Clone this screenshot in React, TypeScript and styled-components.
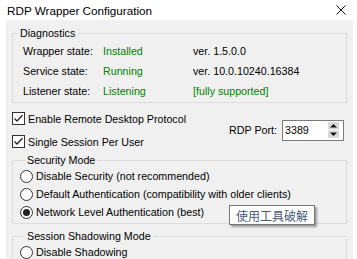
import React from 'react';
import styled, { createGlobalStyle } from 'styled-components';

const FONT = `"Liberation Sans", Arial, sans-serif`;

const Global = createGlobalStyle`
  html, body { margin: 0; padding: 0; background: #fff; }
  body { font-family: ${FONT}; }
`;

const Window = styled.div`
  position: relative;
  width: 357px;
  height: 259px;
  overflow: hidden;
  background: #fff;
  display: flex;
  flex-direction: column;
  font-family: ${FONT};
  font-size: 10.7px;
  color: #000;
`;

const TitleBar = styled.div`
  flex: none;
  height: 20px;
  display: flex;
  align-items: center;
  justify-content: space-between;
  padding: 0 11px 0 7px;
`;

const Title = styled.span`
  font-size: 11.7px;
  color: #000;
`;

const Client = styled.div`
  flex: 1;
  margin: 0 4px 0 6px;
  background: #f0f0f0;
  padding: 6px 6px 0;
  display: flex;
  flex-direction: column;
`;

const Group = styled.fieldset<{ $pl: number; $pt?: number; $pb?: number; $mt?: number }>`
  margin: ${(p) => p.$mt ?? 0}px 0 0;
  min-width: 0;
  border: 1px solid #dcdcdc;
  padding: ${(p) => p.$pt ?? 0}px 0 ${(p) => p.$pb ?? 0}px ${(p) => p.$pl}px;
`;

const Legend = styled.legend`
  margin-left: 5px;
  padding: 0 2px;
  line-height: 14px;
  font-size: inherit;
`;

const DiagGrid = styled.div`
  display: grid;
  grid-template-columns: 80px 90px 1fr;
  grid-auto-rows: 20px;
  align-items: center;
  padding-left: 10px;
`;

const Cell = styled.span<{ $ok?: boolean }>`
  color: ${(p) => (p.$ok ? '#008000' : '#000')};
  white-space: nowrap;
`;

const Options = styled.div`
  margin-top: 4px;
  display: flex;
  align-items: center;
  justify-content: space-between;
  padding-right: 3px;
`;

const CheckList = styled.div`
  display: flex;
  flex-direction: column;
`;

const OptionRow = styled.div<{ $h: number }>`
  height: ${(p) => p.$h}px;
  display: flex;
  align-items: center;
  gap: 3px;
  white-space: nowrap;
`;

const PortField = styled.div`
  display: flex;
  align-items: center;
  gap: 5px;
`;

const SpinInput = styled.div`
  width: 62px;
  height: 21px;
  box-sizing: border-box;
  border: 1px solid #7a7a7a;
  background: #fff;
  display: flex;
  align-items: center;
  justify-content: space-between;
  padding: 0 4px 0 2px;
`;

const Tooltip = styled.div`
  position: absolute;
  left: 229px;
  top: 205px;
  height: 20px;
  box-sizing: border-box;
  padding: 0 6px;
  display: flex;
  align-items: center;
  background: #fff;
  border: 1px solid #767676;
  box-shadow: 2px 2px 2px rgba(0, 0, 0, 0.35);
  font-family: "Noto Sans CJK SC", sans-serif;
  font-size: 12px;
  color: #4a5a78;
  white-space: nowrap;
`;

const CheckBox = () => (
  <svg width="13" height="13" viewBox="0 0 13 13">
    <rect x="0.5" y="0.5" width="12" height="12" fill="#fff" stroke="#333" />
    <path d="M2.5 6.5 L5 9 L10.5 3.2" fill="none" stroke="#222" strokeWidth="1.3" />
  </svg>
);

const Radio = ({ on }: { on?: boolean }) => (
  <svg width="13" height="13" viewBox="0 0 13 13">
    <circle cx="6.5" cy="6.5" r="6" fill="#fff" stroke="#333" />
    {on && <circle cx="6.5" cy="6.5" r="3.5" fill="#222" />}
  </svg>
);

const Spinner = () => (
  <svg width="11" height="16" viewBox="0 0 11 16">
    <rect x="0" y="0" width="11" height="7.5" fill="#dadada" />
    <rect x="0" y="8.5" width="11" height="7.5" fill="#dadada" />
    <path d="M2 5.5 L5.5 2 L9 5.5 Z" fill="#111" />
    <path d="M2 10.5 L5.5 14 L9 10.5 Z" fill="#111" />
  </svg>
);

const CloseIcon = () => (
  <svg width="10" height="10" viewBox="0 0 10 10">
    <path d="M0.5 0.5 L9.5 9.5 M9.5 0.5 L0.5 9.5" stroke="#111" strokeWidth="1" />
  </svg>
);

const diag = [
  ['Wrapper state:', 'Installed', 'ver. 1.5.0.0', false],
  ['Service state:', 'Running', 'ver. 10.0.10240.16384', false],
  ['Listener state:', 'Listening', '[fully supported]', true],
] as const;

export default function App() {
  return (
    <>
      <Global />
      <Window>
        <TitleBar>
          <Title>RDP Wrapper Configuration</Title>
          <CloseIcon />
        </TitleBar>
        <Client>
          <Group $pl={0} $pt={1} $pb={1}>
            <Legend>Diagnostics</Legend>
            <DiagGrid>
              {diag.map(([l, v, ver, ok]) => (
                <React.Fragment key={l}>
                  <Cell>{l}</Cell>
                  <Cell $ok>{v}</Cell>
                  <Cell $ok={ok}>{ver}</Cell>
                </React.Fragment>
              ))}
            </DiagGrid>
          </Group>
          <Options>
            <CheckList>
              <OptionRow $h={23}>
                <CheckBox />
                Enable Remote Desktop Protocol
              </OptionRow>
              <OptionRow $h={23}>
                <CheckBox />
                Single Session Per User
              </OptionRow>
            </CheckList>
            <PortField>
              <span>RDP Port:</span>
              <SpinInput>
                <span>3389</span>
                <Spinner />
              </SpinInput>
            </PortField>
          </Options>
          <Group $pl={7} $pb={2}>
            <Legend>Security Mode</Legend>
            <OptionRow $h={18}>
              <Radio />
              Disable Security (not recommended)
            </OptionRow>
            <OptionRow $h={18}>
              <Radio />
              Default Authentication (compatibility with older clients)
            </OptionRow>
            <OptionRow $h={18}>
              <Radio on />
              Network Level Authentication (best)
            </OptionRow>
          </Group>
          <Group $pl={7} $mt={5}>
            <Legend>Session Shadowing Mode</Legend>
            <OptionRow $h={18}>
              <Radio />
              Disable Shadowing
            </OptionRow>
          </Group>
        </Client>
        <Tooltip>使用工具破解</Tooltip>
      </Window>
    </>
  );
}
